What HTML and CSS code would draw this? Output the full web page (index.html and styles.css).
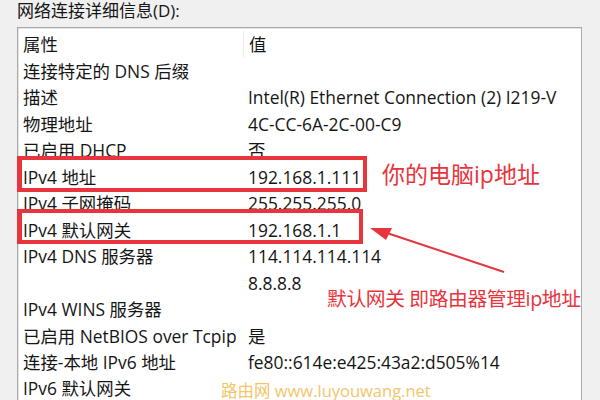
FILE: index.html
```html
<!DOCTYPE html>
<html lang="zh-CN">
<head>
  <meta charset="UTF-8">
  <title>网络连接详细信息</title>
  <link rel="stylesheet" href="styles.css">
</head>
<body>
  <div class="title">网络连接详细信息(D):</div>
  <div class="panel">
    <div class="list">
      <div class="row head"><span class="key">属性</span><span class="val">值</span></div>
      <div class="row"><span class="key">连接特定的 DNS 后缀</span><span class="val"></span></div>
      <div class="row"><span class="key">描述</span><span class="val">Intel(R) Ethernet Connection (2) I219-V</span></div>
      <div class="row"><span class="key">物理地址</span><span class="val">4C-CC-6A-2C-00-C9</span></div>
      <div class="row"><span class="key">已启用 DHCP</span><span class="val">否</span></div>
      <div class="row"><span class="key">IPv4 地址</span><span class="val">192.168.1.111</span></div>
      <div class="row"><span class="key">IPv4 子网掩码</span><span class="val">255.255.255.0</span></div>
      <div class="row"><span class="key">IPv4 默认网关</span><span class="val">192.168.1.1</span></div>
      <div class="row"><span class="key">IPv4 DNS 服务器</span><span class="val">114.114.114.114</span></div>
      <div class="row"><span class="key"></span><span class="val">8.8.8.8</span></div>
      <div class="row"><span class="key">IPv4 WINS 服务器</span><span class="val"></span></div>
      <div class="row"><span class="key">已启用 NetBIOS over Tcpip</span><span class="val">是</span></div>
      <div class="row"><span class="key">连接-本地 IPv6 地址</span><span class="val">fe80::614e:e425:43a2:d505%14</span></div>
      <div class="row last"><span class="key">IPv6 默认网关</span><span class="val"></span></div>
    </div>

    <!-- annotations -->
    <div class="mark mark-ip"></div>
    <div class="mark mark-gw"></div>
    <div class="note note-ip">你的电脑ip地址</div>
    <div class="note note-gw">默认网关 即路由器管理ip地址</div>
    <svg class="arrow" width="140" height="60" viewBox="0 0 140 60">
      <line x1="136" y1="52" x2="16" y2="12" stroke="#e8343c" stroke-width="2"/>
      <polygon points="2,8 24,8 18,20" fill="#e8343c"/>
    </svg>
    <div class="watermark">路由网 www.luyouwang.net</div>
  </div>
</body>
</html>
```

FILE: styles.css
```css
body {
  margin: 0;
  background: #f0f0f0;
  font-family: "Open Sans", "Noto Sans CJK SC", sans-serif;
  color: #151515;
  width: 600px;
  height: 400px;
  overflow: hidden;
}
.title {
  font-size: 17px;
  line-height: 20px;
  padding: 1px 0 0 17px;
  height: 26px;
}
.panel {
  position: relative;
  margin-left: 17px;
  width: 565px;
  height: 373px;
  box-sizing: border-box;
  background: #fff;
  border: 1px solid #a9a9a9;
  border-bottom: none;
  box-shadow: inset 1px 1px 0 #e3e3e3;
}
.list {
  padding-top: 3px;
}
.row {
  display: grid;
  grid-template-columns: 225px 1fr;
  height: 26.5px;
  line-height: 26.5px;
  font-size: 17.4px;
  white-space: nowrap;
}
.row.last {
  height: 24px;
  line-height: 24px;
}
.key {
  padding-left: 5px;
}
.val {
  padding-left: 5px;
}
.head .val {
  border-left: 1px solid #ececec;
}
.mark {
  position: absolute;
  left: -1px;
  border: 4px solid #e8343c;
  border-left-width: 5px;
  box-sizing: border-box;
}
.mark-ip {
  top: 128px;
  width: 350px;
  height: 36px;
}
.mark-gw {
  top: 181px;
  width: 346px;
  height: 35px;
}
.note {
  position: absolute;
  color: #e8343c;
  white-space: nowrap;
}
.note-ip {
  left: 364px;
  top: 128px;
  font-size: 23px;
}
.note-gw {
  left: 309px;
  top: 255px;
  font-size: 19.8px;
  letter-spacing: -0.4px;
}
.arrow {
  position: absolute;
  left: 350px;
  top: 192px;
}
.watermark {
  position: absolute;
  left: 203px;
  top: 354px;
  font-size: 16.5px;
  line-height: 18px;
  color: #f3c56a;
  white-space: nowrap;
}
```
